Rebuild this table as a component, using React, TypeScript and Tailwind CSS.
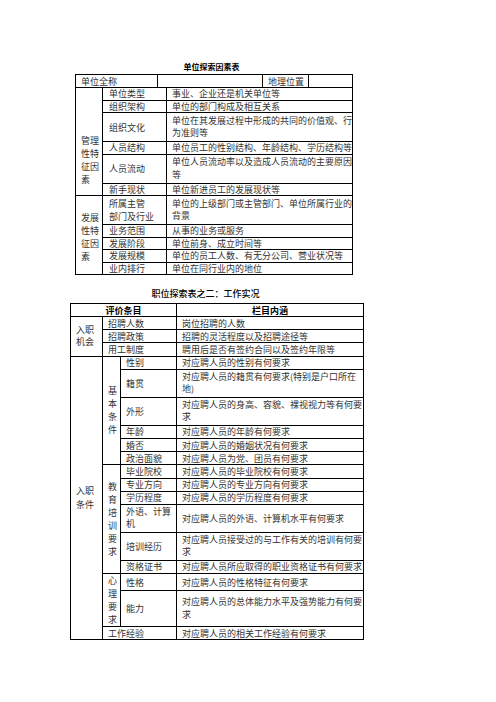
const font = { fontFamily: '"Noto Sans CJK SC", "Noto Sans", sans-serif' };

type Row = { item: string[]; text: string[]; tall?: boolean };

const manage: Row[] = [
  { item: ["单位类型"], text: ["事业、企业还是机关单位等"] },
  { item: ["组织架构"], text: ["单位的部门构成及相互关系"] },
  { item: ["组织文化"], text: ["单位在其发展过程中形成的共同的价值观、行", "为准则等"], tall: true },
  { item: ["人员结构"], text: ["单位员工的性别结构、年龄结构、学历结构等"] },
  { item: ["人员流动"], text: ["单位人员流动率以及造成人员流动的主要原因", "等"], tall: true },
  { item: ["新手现状"], text: ["单位新进员工的发展现状等"] },
];

const develop: Row[] = [
  { item: ["所属主管", "部门及行业"], text: ["单位的上级部门或主管部门、单位所属行业的", "背景"], tall: true },
  { item: ["业务范围"], text: ["从事的业务或服务"] },
  { item: ["发展阶段"], text: ["单位前身、成立时间等"] },
  { item: ["发展规模"], text: ["单位的员工人数、有无分公司、营业状况等"] },
  { item: ["业内排行"], text: ["单位在同行业内的地位"] },
];

const entry: Row[] = [
  { item: ["招聘人数"], text: ["岗位招聘的人数"] },
  { item: ["招聘政策"], text: ["招聘的灵活程度以及招聘途径等"] },
  { item: ["用工制度"], text: ["聘用后是否有签约合同以及签约年限等"] },
];

const groups: { name: string[]; rows: Row[] }[] = [
  {
    name: ["基", "本", "条", "件"],
    rows: [
      { item: ["性别"], text: ["对应聘人员的性别有何要求"] },
      { item: ["籍贯"], text: ["对应聘人员的籍贯有何要求(特别是户口所在", "地)"], tall: true },
      { item: ["外形"], text: ["对应聘人员的身高、容貌、裸视视力等有何要", "求"], tall: true },
      { item: ["年龄"], text: ["对应聘人员的年龄有何要求"] },
      { item: ["婚否"], text: ["对应聘人员的婚姻状况有何要求"] },
      { item: ["政治面貌"], text: ["对应聘人员为党、团员有何要求"] },
    ],
  },
  {
    name: ["教", "育", "培", "训", "要", "求"],
    rows: [
      { item: ["毕业院校"], text: ["对应聘人员的毕业院校有何要求"] },
      { item: ["专业方向"], text: ["对应聘人员的专业方向有何要求"] },
      { item: ["学历程度"], text: ["对应聘人员的学历程度有何要求"] },
      { item: ["外语、计算", "机"], text: ["对应聘人员的外语、计算机水平有何要求"], tall: true },
      { item: ["培训经历"], text: ["对应聘人员接受过的与工作有关的培训有何要", "求"], tall: true },
      { item: ["资格证书"], text: ["对应聘人员所应取得的职业资格证书有何要求"] },
    ],
  },
  {
    name: ["心", "理", "要", "求"],
    rows: [
      { item: ["性格"], text: ["对应聘人员的性格特征有何要求"] },
      { item: ["能力"], text: ["对应聘人员的总体能力水平及强势能力有何要", "求"], tall: true },
    ],
  },
];

const cell = "border border-black px-[5px] leading-[11px] align-middle whitespace-nowrap";

// single lines sit tight; wrapped cells get the looser line pitch of the source
function Lines({ lines, pitch = "leading-[12.5px]" }: { lines: string[]; pitch?: string }) {
  return (
    <div className={lines.length > 1 ? pitch : ""}>
      {lines.map((l, i) => (
        <div key={i}>{l}</div>
      ))}
    </div>
  );
}

function UnitTable() {
  const body = [
    { label: ["管理", "性特", "征因", "素"], rows: manage, pad: "pt-[46px] align-top" },
    { label: ["发展", "性特", "征因", "素"], rows: develop, pad: "pt-[4px]" },
  ];
  return (
    <table className="table-fixed border-collapse w-[277px] text-[9px] text-[#333]">
      <colgroup>
        <col className="w-[27px]" />
        <col className="w-[55px]" />
        <col className="w-[9px]" />
        <col className="w-[96px]" />
        <col className="w-[46px]" />
        <col className="w-[44px]" />
      </colgroup>
      <tbody>
        <tr className="h-[13px]">
          <td colSpan={2} className={cell}>单位全称</td>
          <td colSpan={2} className={cell}></td>
          <td className={cell}>地理位置</td>
          <td className={cell}></td>
        </tr>
        {body.map((g) =>
          g.rows.map((r, i) => (
            <tr key={g.label[0] + i} className={r.tall ? "h-[29px]" : "h-[12.5px]"}>
              {i === 0 && (
                <td rowSpan={g.rows.length} className={`${cell} ${g.pad}`}>
                  <Lines lines={g.label} pitch="leading-[13px]" />
                </td>
              )}
              <td colSpan={2} className={`${cell} pl-[6px]`}>
                <Lines lines={r.item} pitch="leading-[13px]" />
              </td>
              <td colSpan={3} className={`${cell} px-[4px]`}>
                <Lines lines={r.text} />
              </td>
            </tr>
          ))
        )}
      </tbody>
    </table>
  );
}

function JobTable() {
  return (
    <table className="table-fixed border-collapse w-[293px] text-[9px] text-[#333]">
      <colgroup>
        <col className="w-[32px]" />
        <col className="w-[18px]" />
        <col className="w-[56px]" />
        <col className="w-[187px]" />
      </colgroup>
      <tbody>
        <tr className="h-[13px] font-bold text-black">
          <td colSpan={3} className={`${cell} text-center`}>评价条目</td>
          <td className={`${cell} text-center`}>栏目内涵</td>
        </tr>
        {entry.map((r, i) => (
          <tr key={"e" + i} className="h-[13.2px]">
            {i === 0 && (
              <td rowSpan={entry.length} className={cell}>
                <Lines lines={["入职", "机会"]} />
              </td>
            )}
            <td colSpan={2} className={`${cell} px-[4px]`}>
              <Lines lines={r.item} />
            </td>
            <td className={`${cell} px-[4px]`}>
              <Lines lines={r.text} />
            </td>
          </tr>
        ))}
        {groups.map((g, gi) =>
          g.rows.map((r, i) => (
            <tr key={g.name[0] + i} className={r.tall ? "h-[28px]" : "h-[13.2px]"}>
              {gi === 0 && i === 0 && (
                <td rowSpan={15} className={cell}>
                  <Lines lines={["入职", "条件"]} pitch="leading-[14px]" />
                </td>
              )}
              {i === 0 && (
                <td rowSpan={g.rows.length} className={`${cell} px-0 text-center`}>
                  <Lines lines={g.name} pitch="leading-[13px]" />
                </td>
              )}
              <td className={`${cell} px-[4px]`}>
                <Lines lines={r.item} />
              </td>
              <td className={`${cell} px-[4px]`}>
                <Lines lines={r.text} />
              </td>
            </tr>
          ))
        )}
        <tr className="h-[13.2px]">
          <td colSpan={2} className={`${cell} px-[4px]`}>工作经验</td>
          <td className={`${cell} px-[4px]`}>对应聘人员的相关工作经验有何要求</td>
        </tr>
      </tbody>
    </table>
  );
}

export default function App() {
  return (
    <div className="w-[496px] h-[702px] bg-white pt-[61px]" style={font}>
      <div className="ml-[75px] w-[277px] text-center text-[8px] leading-[12px] font-bold text-black pr-[4px]">
        单位探索因素表
      </div>
      <div className="ml-[75px] mt-[1px]">
        <UnitTable />
      </div>
      <div className="ml-[70px] mt-[13px] w-[293px] text-center text-[9px] leading-[12px] font-medium text-black pr-[22px]">
        职位探索表之二：工作实况
      </div>
      <div className="ml-[70px] mt-[3px]">
        <JobTable />
      </div>
    </div>
  );
}
